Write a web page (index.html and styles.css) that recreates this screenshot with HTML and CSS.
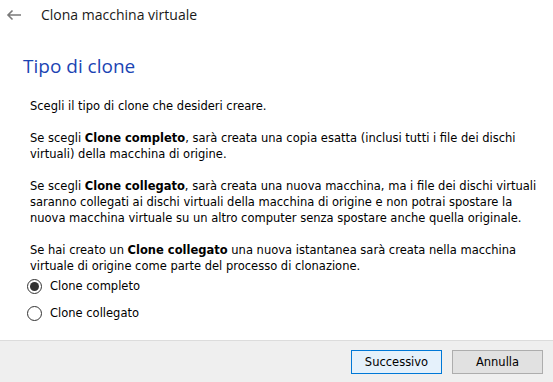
FILE: index.html
```html
<!DOCTYPE html>
<html lang="it">
<head>
  <meta charset="UTF-8" />
  <title>Clona macchina virtuale</title>
  <link rel="stylesheet" href="styles.css">
</head>
<body>
  <div class="window">
    <div class="titlebar">
      <svg class="back" width="16" height="12" viewBox="0 0 16 12">
        <path d="M15 6H2M6.5 1.5L2 6l4.5 4.5" fill="none" stroke="#7a7a7a" stroke-width="1.6"/>
      </svg>
      <span class="title">Clona macchina virtuale</span>
    </div>

    <div class="content">
      <h1>Tipo di clone</h1>
      <p>Scegli il tipo di clone che desideri creare.</p>
      <p>Se scegli <b>Clone completo</b>, sarà creata una copia esatta (inclusi tutti i file dei dischi virtuali) della macchina di origine.</p>
      <p>Se scegli <b>Clone collegato</b>, sarà creata una nuova macchina, ma i file dei dischi virtuali saranno collegati ai dischi virtuali della macchina di origine e non potrai spostare la nuova macchina virtuale su un altro computer senza spostare anche quella originale.</p>
      <p>Se hai creato un <b>Clone collegato</b> una nuova istantanea sarà creata nella macchina virtuale di origine come parte del processo di clonazione.</p>

      <div class="options">
        <label class="radio"><span class="dot checked"></span>Clone completo</label>
        <label class="radio"><span class="dot"></span>Clone collegato</label>
      </div>
    </div>

    <div class="footer">
      <button class="btn primary">Successivo</button>
      <button class="btn">Annulla</button>
    </div>
  </div>
</body>
</html>
```

FILE: styles.css
```css
* {
  margin: 0;
  padding: 0;
  box-sizing: border-box;
}

body {
  background: #fff;
  font-family: 'DejaVu Sans', sans-serif;
  font-size: 11.5px;
  color: #000;
}

.window {
  width: 553px;
  height: 382px;
  display: flex;
  flex-direction: column;
}

.titlebar {
  height: 32px;
  display: flex;
  align-items: center;
  padding: 0 0 3px 6px;
}

.back {
  margin-right: 19px;
}

.title {
  font-family: 'Open Sans', sans-serif;
  font-size: 14px;
  color: #1a1a1a;
}

.content {
  flex: 1;
  min-height: 0;
  overflow: hidden;
  padding: 21px 8px 0 30px;
}

h1 {
  font-family: 'Open Sans', sans-serif;
  font-weight: 400;
  font-size: 19px;
  color: #1b44b3;
  margin-left: -7px;
  margin-bottom: 19px;
}

p {
  line-height: 16px;
  margin-bottom: 16px;
}

p:last-of-type {
  margin-bottom: 0;
}

.options {
  display: flex;
  flex-direction: column;
  gap: 11px;
  margin-top: 4px;
  margin-left: -3px;
}

.radio {
  display: flex;
  align-items: center;
  gap: 8px;
  height: 16px;
}

.dot {
  width: 15px;
  height: 15px;
  border: 1px solid #333;
  border-radius: 50%;
  display: flex;
  align-items: center;
  justify-content: center;
}

.dot.checked::after {
  content: '';
  width: 9px;
  height: 9px;
  border-radius: 50%;
  background: #333;
}

.footer {
  height: 42px;
  flex-shrink: 0;
  background: #efefef;
  border-top: 1px solid #dcdcdc;
  display: flex;
  justify-content: flex-end;
  align-items: center;
  gap: 10px;
  padding-right: 10px;
}

.btn {
  width: 91px;
  height: 24px;
  font-family: inherit;
  font-size: 11.5px;
  background: #e1e1e1;
  border: 1px solid #adadad;
  color: #000;
}

.btn.primary {
  background: #e5f1fb;
  border-color: #0078d7;
}
```
